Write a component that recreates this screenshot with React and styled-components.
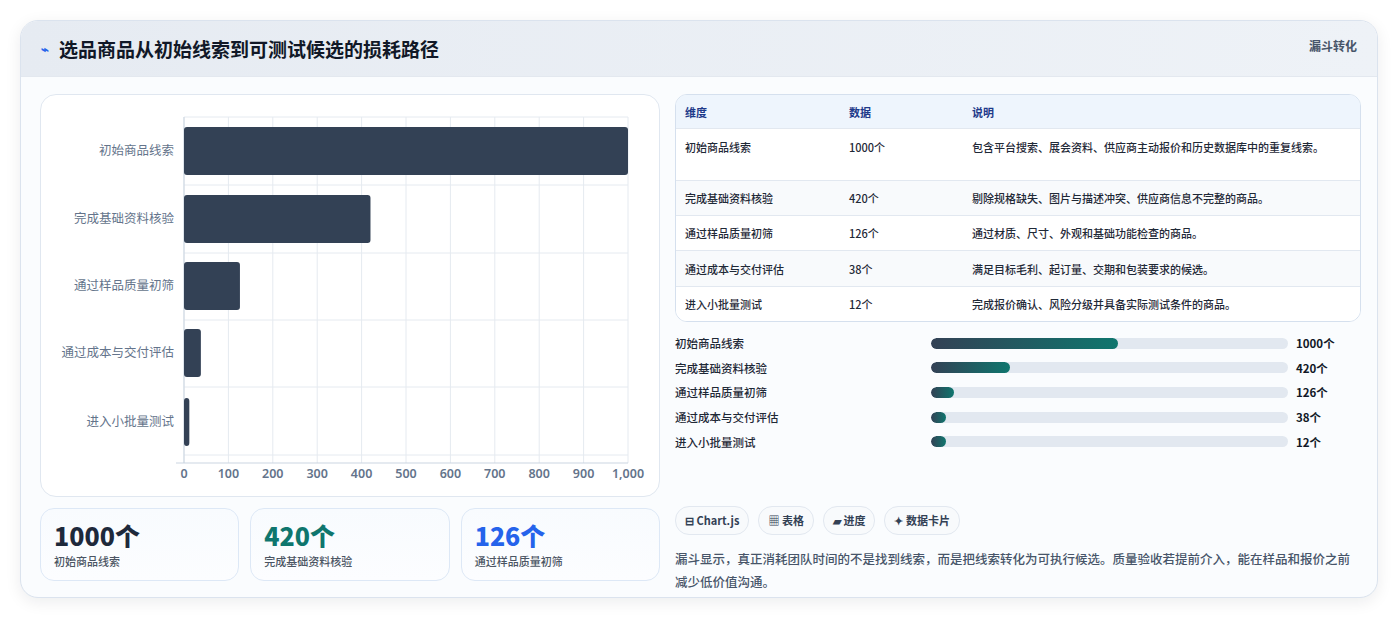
import React from "react";
import styled, { createGlobalStyle } from "styled-components";

const G = createGlobalStyle`
  body{margin:0;background:#fff;font-family:"Noto Sans CJK SC","Noto Sans",sans-serif;}
`;
const Page = styled.div`padding:20px 21px 21px 20px;`;
const Card = styled.div`
  border:1px solid #dbe3ee;border-radius:18px;overflow:hidden;background:#fafcfe;
  box-shadow:0 4px 16px rgba(15,23,42,.08);height:578px;box-sizing:border-box;
`;
const Header = styled.div`
  height:55px;display:flex;align-items:center;justify-content:space-between;
  padding:0 20px 0 20px;background:linear-gradient(90deg,#e6ebf2,#eef2f7);
  border-bottom:1px solid #e3e8ef;
`;
const Title = styled.h1`
  margin:0;font-size:19px;font-weight:700;color:#111827;display:flex;align-items:center;gap:10px;
`;
const Tag = styled.span`font-size:12px;font-weight:700;color:#475569;align-self:flex-start;margin-top:16px;`;
const Body = styled.div`display:grid;grid-template-columns:620px 686px;gap:15px;padding:17px 18px 0 19px;`;
const Col = styled.div`display:flex;flex-direction:column;`;
const ChartBox = styled.div`
  height:403px;border:1px solid #e0e7f0;border-radius:16px;background:#fff;box-sizing:border-box;
`;
const Stats = styled.div`display:grid;grid-template-columns:repeat(3,1fr);gap:11px;margin-top:11px;`;
const Stat = styled.div`
  height:73px;border:1px solid #dde8f6;border-radius:14px;box-sizing:border-box;padding:10px 13px;
  background:linear-gradient(180deg,#f8fbfe,#fcfdff);
`;
const Big = styled.div`font-size:25px;font-weight:800;line-height:32px;color:${p=>p.c};`;
const Small = styled.div`font-size:11px;color:#4b5563;margin-top:2px;font-weight:500;`;
const Table = styled.div`border:1px solid #d5e0ee;border-radius:12px;overflow:hidden;background:#fff;font-size:11px;`;
const Row = styled.div`
  display:grid;grid-template-columns:164px 123px 1fr;padding:0 18px 0 9px;
  min-height:${p=>p.h}px;align-items:${p=>p.top?"start":"center"};
  padding-top:${p=>p.top?9:0}px;box-sizing:border-box;
  background:${p=>p.head?"#eef5fd":p.alt?"#f8fafc":"#fff"};
  color:${p=>p.head?"#1e3a8a":"#1f2937"};font-weight:${p=>p.head?700:500};
  border-top:${p=>p.first?"none":"1px solid #e2e8f0"};line-height:18px;
`;
const Bars = styled.div`display:flex;flex-direction:column;gap:6.7px;margin-top:12px;`;
const BarRow = styled.div`display:grid;grid-template-columns:256px 357px auto;gap:0;align-items:center;font-size:11.5px;height:18px;`;
const BarLabel = styled.span`color:#1f2937;font-weight:500;`;
const Track = styled.div`height:11px;background:#e2e8f0;border-radius:6px;overflow:hidden;`;
const Fill = styled.div`height:100%;border-radius:6px;background:linear-gradient(90deg,#334155,#0f766e);`;
const Val = styled.span`font-weight:700;color:#111827;padding-left:8px;`;
const Chips = styled.div`display:flex;gap:9px;margin-top:55px;`;
const Chip = styled.span`
  height:27px;padding:0 9px;border:1px solid #e2e8f0;border-radius:14px;background:#f8fafc;
  display:flex;align-items:center;gap:3px;font-size:11px;font-weight:600;color:#334155;
`;
const Note = styled.p`margin:12px 0 0;font-size:12.5px;line-height:23px;color:#475569;font-weight:500;`;

const cats=["初始商品线索","完成基础资料核验","通过样品质量初筛","通过成本与交付评估","进入小批量测试"];
const vals=[1000,420,126,38,12];

function Chart(){
  const x0=143,w=444,ys=[56,124,191,258,327];
  return (
    <svg width="618" height="401" style={{display:"block"}}>
      {Array.from({length:11}).map((_,i)=>(
        <line key={i} x1={x0+i*w/10} x2={x0+i*w/10} y1="22" y2="368" stroke="#e5eaf0"/>
      ))}
      {[22,90,158,225,292,360].map(y=><line key={y} x1={x0} x2={x0+w} y1={y} y2={y} stroke="#e5eaf0"/>)}
      <line x1={x0} x2={x0} y1="22" y2="368" stroke="#cbd5e1"/>
      <line x1={x0-8} x2={x0+w} y1="368" y2="368" stroke="#cbd5e1"/>
      {vals.map((v,i)=>(
        <g key={i}>
          <rect x={x0} y={ys[i]-24} width={Math.max(v/1000*w,4)} height="48" rx="3" fill="#334155"/>
          <text x={x0-10} y={ys[i]+4} textAnchor="end" fontSize="12.5" fill="#64748b" fontFamily="Noto Sans CJK SC">{cats[i]}</text>
        </g>
      ))}
      {Array.from({length:11}).map((_,i)=>(
        <text key={i} x={x0+i*w/10} y="383" textAnchor="middle" fontSize="12.5" fontWeight="600" fill="#64748b" fontFamily="Noto Sans">{i===10?"1,000":i*100}</text>
      ))}
    </svg>
  );
}

const rows=[
  ["初始商品线索","1000个","包含平台搜索、展会资料、供应商主动报价和历史数据库中的重复线索。",52],
  ["完成基础资料核验","420个","剔除规格缺失、图片与描述冲突、供应商信息不完整的商品。",35],
  ["通过样品质量初筛","126个","通过材质、尺寸、外观和基础功能检查的商品。",35],
  ["通过成本与交付评估","38个","满足目标毛利、起订量、交期和包装要求的候选。",36],
  ["进入小批量测试","12个","完成报价确认、风险分级并具备实际测试条件的商品。",35],
];
const pct=[52.4,22.1,6.4,4.2,4.2];

export default function App(){
  return (<>
    <G/>
    <Page><Card>
      <Header>
        <Title><span style={{color:"#2563eb",fontSize:13}}>⌁</span>选品商品从初始线索到可测试候选的损耗路径</Title>
        <Tag>漏斗转化</Tag>
      </Header>
      <Body>
        <Col>
          <ChartBox><Chart/></ChartBox>
          <Stats>
            <Stat><Big c="#1e293b">1000个</Big><Small>初始商品线索</Small></Stat>
            <Stat><Big c="#0f766e">420个</Big><Small>完成基础资料核验</Small></Stat>
            <Stat><Big c="#2563eb">126个</Big><Small>通过样品质量初筛</Small></Stat>
          </Stats>
        </Col>
        <Col>
          <Table>
            <Row head first h={33}><span>维度</span><span>数据</span><span>说明</span></Row>
            {rows.map((r,i)=>(
              <Row key={i} h={r[3]} alt={i%2===1} top={i===0}><span>{r[0]}</span><span>{r[1]}</span><span>{r[2]}</span></Row>
            ))}
          </Table>
          <Bars>
            {cats.map((c,i)=>(
              <BarRow key={i}><BarLabel>{c}</BarLabel><Track><Fill style={{width:pct[i]+"%"}}/></Track><Val>{vals[i]}个</Val></BarRow>
            ))}
          </Bars>
          <Chips>
            <Chip>⊟ Chart.js</Chip><Chip>▦ 表格</Chip><Chip>▰ 进度</Chip><Chip>✦ 数据卡片</Chip>
          </Chips>
          <Note>漏斗显示，真正消耗团队时间的不是找到线索，而是把线索转化为可执行候选。质量验收若提前介入，能在样品和报价之前减少低价值沟通。</Note>
        </Col>
      </Body>
    </Card></Page>
  </>);
}
